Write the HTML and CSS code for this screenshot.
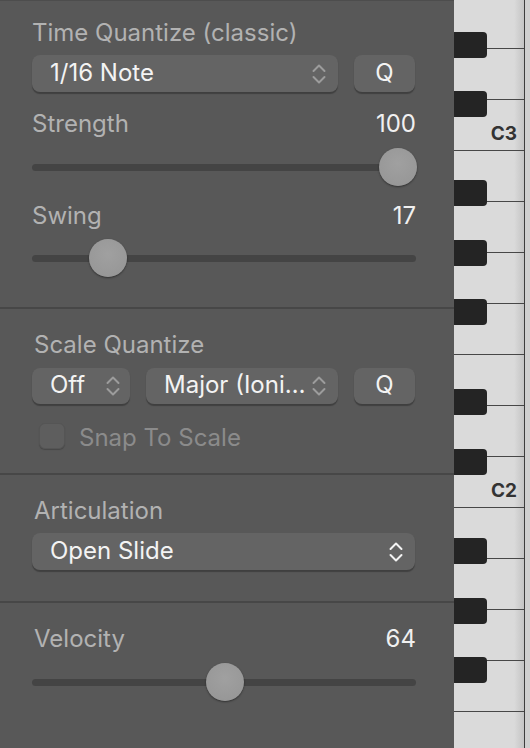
FILE: index.html
```html
<!DOCTYPE html>
<html>
<head>
<meta charset="utf-8">
<link rel="stylesheet" href="styles.css">
</head>
<body>
<div class="app">
  <div class="panel">
    <section class="sec sec-time">
      <div class="label">Time Quantize (classic)</div>
      <div class="ctl-row row-time">
        <div class="popup popup-note"><span class="ptext">1/16 Note</span>
          <svg class="chev" viewBox="0 0 14 22"><path d="M1.5 8 L7 2.5 L12.5 8 M1.5 14 L7 19.5 L12.5 14"/></svg>
        </div>
        <div class="qbtn">Q</div>
      </div>
      <div class="head head-strength"><span class="label">Strength</span><span class="value">100</span></div>
      <div class="slider slider-strength"><div class="track"></div><div class="knob" style="left:347px"></div></div>
      <div class="head head-swing"><span class="label">Swing</span><span class="value">17</span></div>
      <div class="slider slider-swing"><div class="track"></div><div class="knob" style="left:57px"></div></div>
    </section>
    <section class="sec sec-scale">
      <div class="label label-ind">Scale Quantize</div>
      <div class="ctl-row row-scale">
        <div class="popup popup-off"><span class="ptext">Off</span>
          <svg class="chev" viewBox="0 0 14 22"><path d="M1.5 8 L7 2.5 L12.5 8 M1.5 14 L7 19.5 L12.5 14"/></svg>
        </div>
        <div class="popup popup-major"><span class="ptext">Major (Ioni…</span>
          <svg class="chev" viewBox="0 0 14 22"><path d="M1.5 8 L7 2.5 L12.5 8 M1.5 14 L7 19.5 L12.5 14"/></svg>
        </div>
        <div class="qbtn">Q</div>
      </div>
      <div class="snap"><span class="checkbox"></span><span class="snap-text">Snap To Scale</span></div>
    </section>
    <section class="sec sec-artic">
      <div class="label label-ind">Articulation</div>
      <div class="popup popup-artic"><span class="ptext">Open Slide</span>
        <svg class="chev chev-bright" viewBox="0 0 14 22"><path d="M1.5 8 L7 2.5 L12.5 8 M1.5 14 L7 19.5 L12.5 14"/></svg>
      </div>
    </section>
    <section class="sec sec-vel">
      <div class="head"><span class="label label-ind">Velocity</span><span class="value">64</span></div>
      <div class="slider slider-vel"><div class="track"></div><div class="knob" style="left:174px"></div></div>
    </section>
  </div>
  <div class="piano">
    <div class="keys">
      <div class="wkey"></div>
      <div class="wkey"></div>
      <div class="wkey"><span class="note">C3</span></div>
      <div class="wkey"></div>
      <div class="wkey"></div>
      <div class="wkey"></div>
      <div class="wkey"></div>
      <div class="wkey"></div>
      <div class="wkey"></div>
      <div class="wkey"><span class="note">C2</span></div>
      <div class="wkey"></div>
      <div class="wkey"></div>
      <div class="wkey"></div>
      <div class="wkey"></div>
      <div class="wkey"></div>
    </div>
    <div class="bkey" style="top:32px"></div>
    <div class="bkey" style="top:91px"></div>
    <div class="bkey" style="top:180px"></div>
    <div class="bkey" style="top:240px"></div>
    <div class="bkey" style="top:299px"></div>
    <div class="bkey" style="top:389px"></div>
    <div class="bkey" style="top:449px"></div>
    <div class="bkey" style="top:538px"></div>
    <div class="bkey" style="top:598px"></div>
    <div class="bkey" style="top:657px"></div>
  </div>
</div>
</body>
</html>
```
FILE: styles.css
```css
html, body {
  margin: 0;
  padding: 0;
}
body {
  width: 530px;
  height: 748px;
  overflow: hidden;
  background: #ffffff;
  font-family: Inter, "Noto Sans", "Liberation Sans", sans-serif;
  font-size: 24px;
}
.app {
  display: flex;
  height: 748px;
}
.panel {
  width: 454px;
  flex: none;
  background: #585858;
  border-top: 1px solid #4d4d4d;
  box-sizing: border-box;
  display: flex;
  flex-direction: column;
}
.sec {
  padding: 0 38px 0 32px;
  border-bottom: 2px solid #474747;
}
.sec:last-child {
  border-bottom: none;
  flex: 1;
}
.sec-time { padding-top: 18px; padding-bottom: 30px; }
.sec-scale { padding-top: 22px; padding-bottom: 24px; }
.sec-artic { padding-top: 22px; padding-bottom: 31px; }
.sec-vel { padding-top: 22px; }

.label {
  color: #b2b2b2;
  line-height: 28px;
  height: 28px;
  white-space: nowrap;
}
.label-ind { padding-left: 2px; }
.value {
  color: #f0f0f0;
  line-height: 28px;
}
.head {
  display: flex;
  justify-content: space-between;
  height: 28px;
}
.head-strength { margin-top: 18px; }
.head-swing { margin-top: 16px; }

.ctl-row {
  display: flex;
  gap: 16px;
}
.row-time { margin-top: 8px; height: 37px; }
.row-scale { margin-top: 9px; height: 36px; }

.popup {
  box-sizing: border-box;
  height: 100%;
  background: #646464;
  border-radius: 8px;
  box-shadow: 0 1.5px 1px rgba(0, 0, 0, 0.28);
  display: flex;
  align-items: center;
  justify-content: space-between;
  padding: 0 12px 2px 18px;
}
.ptext {
  color: #f3f3f3;
  line-height: 28px;
  white-space: nowrap;
}
.popup-note { width: 306px; }
.popup-off { width: 98px; padding-right: 10px; }
.popup-major { width: 192px; }
.popup-artic {
  margin-top: 8px;
  height: 37px;
  width: 383px;
}
.chev {
  width: 14px;
  height: 22px;
  margin-top: 2px;
  fill: none;
  stroke: #9c9c9c;
  stroke-width: 2;
  stroke-linecap: round;
  stroke-linejoin: round;
}
.chev-bright { stroke: #f3f3f3; }

.qbtn {
  width: 61px;
  box-sizing: border-box;
  background: #646464;
  border-radius: 8px;
  box-shadow: 0 1.5px 1px rgba(0, 0, 0, 0.28);
  color: #f3f3f3;
  display: flex;
  align-items: center;
  justify-content: center;
  padding-bottom: 2px;
  line-height: 28px;
}

.slider {
  position: relative;
  height: 38px;
  display: flex;
  align-items: center;
}
.slider-strength { margin-top: 10px; }
.slider-swing { margin-top: 9px; }
.slider-vel { margin-top: 10px; }
.track {
  flex: 1;
  height: 7px;
  border-radius: 4px;
  background: #444444;
}
.knob {
  position: absolute;
  top: 0;
  width: 38px;
  height: 38px;
  border-radius: 50%;
  background: radial-gradient(circle at 50% 40%, #a0a0a0 0%, #989898 70%, #8f8f8f 100%);
  box-shadow: 0 1px 2px rgba(0, 0, 0, 0.45);
}

.snap {
  margin-top: 19px;
  height: 26px;
  display: flex;
  align-items: center;
  padding-left: 7px;
}
.checkbox {
  width: 26px;
  height: 26px;
  box-sizing: border-box;
  border-radius: 6px;
  background: #5e5e5e;
  border: 1px solid #555555;
  box-shadow: 0 1px 1px rgba(0, 0, 0, 0.2);
}
.snap-text {
  margin-left: 14px;
  margin-top: 4px;
  color: #8b8b8b;
  line-height: 28px;
}

.piano {
  flex: 1;
  position: relative;
  overflow: hidden;
  background: #cfcfcf;
}
.keys {
  width: 70px;
  margin-top: -2px;
  display: flex;
  flex-direction: column;
  border-right: 1.5px solid #3c3c3c;
}
.wkey {
  flex: none;
  height: 51px;
  box-sizing: border-box;
  border-bottom: 1.5px solid #474747;
  background: linear-gradient(to right, #dadada 0%, #dadada 86%, #c4c4c4 100%);
  position: relative;
}
.note {
  position: absolute;
  right: 7px;
  bottom: 7px;
  font-size: 19px;
  font-weight: 700;
  line-height: 19px;
  color: #333333;
}
.bkey {
  position: absolute;
  left: 0;
  width: 33px;
  height: 26px;
  background: #242424;
  border-radius: 0 4px 4px 0;
}
```
